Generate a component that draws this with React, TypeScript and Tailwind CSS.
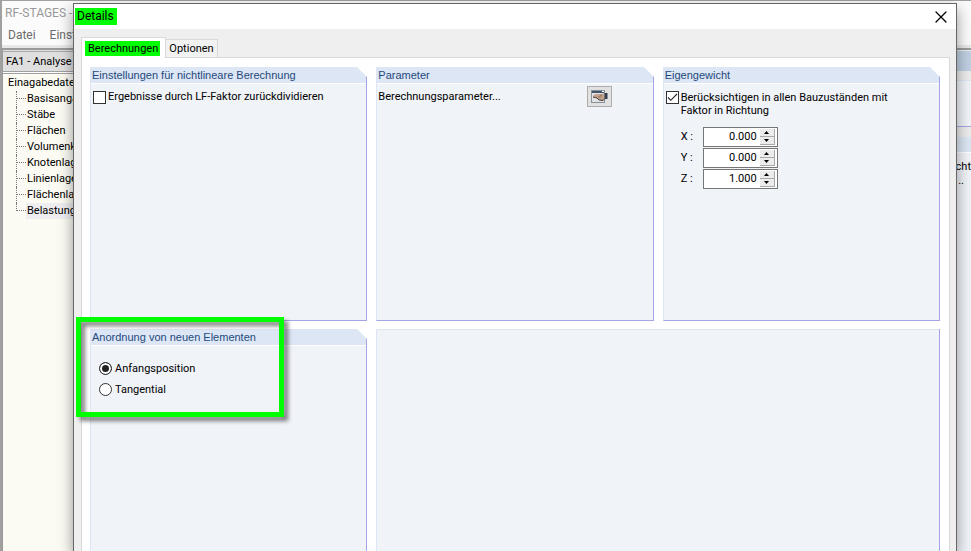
import { useState } from 'react';
import type { ReactNode } from 'react';
import { X } from 'lucide-react';

const treeItems = [
  'Basisangaben',
  'Stäbe',
  'Flächen',
  'Volumenkörper',
  'Knotenlager',
  'Linienlager',
  'Flächenlager',
  'Belastung',
];

interface PanelProps {
  title?: string;
  className?: string;
  children?: ReactNode;
}

function Panel({ title, className = '', children }: PanelProps) {
  return (
    <section className={`relative flex flex-col border-l border-r border-l-[#dce6f4] border-r-[#a5a5e6] bg-[#f0f3f8] ${className}`}>
      {title ? (
        <>
          <h2 className="h-4 bg-[#dce6f4] pl-px text-[11px] leading-4 text-[#1f497d] font-['Liberation_Sans',Arial,sans-serif]">
            {title}
          </h2>
          <div className="h-px bg-white" />
          {/* Cut corner */}
          <svg className="absolute -right-px top-0" width="10" height="10" viewBox="0 0 10 10">
            <path d="M0 0H10V10Z" fill="#fff" />
          </svg>
        </>
      ) : (
        <div className="h-px bg-[#dce6f0]" />
      )}
      {children}
    </section>
  );
}

interface FactorFieldProps {
  axis: string;
  value: number;
  onChange: (value: number) => void;
}

function FactorField({ axis, value, onChange }: FactorFieldProps) {
  const id = `factor-${axis}`;
  return (
    <div className="flex items-center">
      <label htmlFor={id} className="w-[22px] whitespace-pre">
        {axis} :
      </label>
      <div className="flex h-5 w-[75px] items-center border border-[#767676] bg-white pr-[2px]">
        <input
          id={id}
          type="text"
          className="min-w-0 flex-1 bg-transparent pr-[3px] text-right outline-none"
          value={value.toFixed(3)}
          onChange={(e) => onChange(Number(e.target.value) || 0)}
        />
        <div className="flex h-4 w-[15px] flex-col">
          <button
            type="button"
            aria-label={`${axis} erhöhen`}
            className="flex h-2 items-center justify-center border-r border-b border-[#a9a9a9] bg-[#ececec]"
            onClick={() => onChange(value + 1)}
          >
            <svg width="5" height="3" viewBox="0 0 5 3">
              <path d="M2.5 0L5 3H0Z" fill="#000" />
            </svg>
          </button>
          <button
            type="button"
            aria-label={`${axis} verringern`}
            className="flex h-2 items-center justify-center border-r border-b border-[#a9a9a9] bg-[#ececec]"
            onClick={() => onChange(value - 1)}
          >
            <svg width="5" height="3" viewBox="0 0 5 3">
              <path d="M0 0H5L2.5 3Z" fill="#000" />
            </svg>
          </button>
        </div>
      </div>
    </div>
  );
}

function CheckBox({ id, checked, onChange }: { id: string; checked: boolean; onChange: (v: boolean) => void }) {
  return (
    <span className="relative flex size-[13px] shrink-0">
      <input
        id={id}
        type="checkbox"
        className="size-[13px] appearance-none border border-[#333] bg-white"
        checked={checked}
        onChange={(e) => onChange(e.target.checked)}
      />
      {checked && (
        <svg className="pointer-events-none absolute inset-0" width="13" height="13" viewBox="0 0 13 13" fill="none">
          <path d="M2 6.5L4.8 9.3L11 3" stroke="#222" strokeWidth="1.1" />
        </svg>
      )}
    </span>
  );
}

function HandIcon() {
  return (
    <svg width="17" height="14" viewBox="0 0 17 14">
      <rect x="0.5" y="0.5" width="13" height="12" fill="#dfe3e8" stroke="#8a9098" />
      <rect x="1" y="1" width="12" height="2" fill="#41546c" />
      <rect x="11" y="1" width="2" height="1" fill="#fff" />
      <path d="M2 5.5L5 4H9L12 3.5L14 5V8.5L12 10.5L8 10L6 8L2 7Z" fill="#c2a48e" />
      <path d="M2 7L6 8L8 10L12 10.5L14 8.5" stroke="#4b3b32" strokeWidth="1" fill="none" />
      <path d="M7 7H10M9 5L11 6" stroke="#7d6351" strokeWidth="0.8" />
      <rect x="13.5" y="3" width="3" height="6" fill="#34404f" />
    </svg>
  );
}

function MainWindow() {
  return (
    <div className="flex h-full flex-col border-t border-l-2 border-[#a0a0a0] bg-[#fbfbfb]">
      <div className="flex h-6 items-center pl-[3px] text-[12px] text-[#999]">RF-STAGES -</div>
      <nav className="flex h-5 items-center gap-[14px] pl-[6px] text-[12px] text-[#6b6b6b]">
        <a href="#datei">Datei</a>
        <a href="#einstellungen">Einstellungen</a>
      </nav>
      <div className="h-[3px] bg-[#e8e8e8]" />
      <div className="flex min-h-0 flex-1 border-t-2 border-l border-[#9a9a9a]">
        <aside className="flex w-[160px] flex-col bg-[#fbfbf3]">
          <div className="border-b border-[#a0a0a0] bg-[#dfdfdf] pt-px">
            <div className="h-5 border-t border-[#a9a9a9] pl-[3px] leading-5">FA1 - Analyse</div>
          </div>
          <div className="h-[2px] border-b border-[#a0a0a0] bg-white" />
          <div className="pt-px pl-[5px] leading-4">Einagabedaten</div>
          <ul className="pl-[13px]">
            {treeItems.map((item, i) => (
              <li key={item} className="flex h-4 whitespace-nowrap leading-4">
                <span className={`w-px border-l border-dotted border-[#777] ${i === treeItems.length - 1 ? 'h-2' : 'h-4'}`} />
                <span className="h-2 w-[9px] border-b border-dotted border-[#777]" />
                <span className={`flex-1 pl-px ${i === treeItems.length - 1 ? 'bg-[#eeeef0]' : ''}`}>{item}</span>
              </li>
            ))}
          </ul>
        </aside>
        <main className="flex flex-1 flex-col bg-[#ececec] text-right">
          <div className="mt-px h-5 bg-[#bfd0e2]" />
          <div className="mt-[9px] h-[47px] border-t border-b border-t-[#dce6f4] border-b-[#a5a5e6] bg-[#f0f3f8]" />
          <div className="mt-[10px] h-4 border-b border-white bg-[#dce6f4]" />
          <div className="flex-1 bg-[#f0f3f8] pt-[7px] leading-[14px]">
            <p>cht</p>
            <p className="pr-[7px]">..</p>
          </div>
        </main>
      </div>
    </div>
  );
}

export default function App() {
  const [divideByFactor, setDivideByFactor] = useState(false);
  const [selfWeight, setSelfWeight] = useState(true);
  const [factors, setFactors] = useState({ X: 0, Y: 0, Z: 1 });
  const [position, setPosition] = useState('Anfangsposition');

  return (
    <div className="relative h-screen overflow-hidden font-[Roboto,Tahoma,sans-serif] text-[11px] leading-[14px] text-black">
      <MainWindow />

      {/* Dialog */}
      <div
        role="dialog"
        aria-label="Details"
        className="absolute top-[3px] right-[14px] bottom-0 left-[73px] flex flex-col border border-b-0 border-[#666] bg-[#efefef] shadow-[0_6px_14px_rgba(0,0,0,0.4)]"
      >
        <header className="flex h-[25px] shrink-0 items-center justify-between bg-white pr-[5px] pl-px">
          <h1 className="h-[17px] w-[42px] bg-[#00ff00] pl-[2px] text-[12px] leading-[17px]">Details</h1>
          <button type="button" aria-label="Schließen">
            <X size={20} strokeWidth={1.5} />
          </button>
        </header>

        <div role="tablist" className="mt-2 flex h-5 shrink-0 items-end pl-[7px]">
          <button
            type="button"
            role="tab"
            aria-selected="true"
            className="relative z-10 -mb-px flex h-[21px] w-[85px] items-center border border-b-0 border-[#d9d9d9] bg-white pl-[3px]"
          >
            <span className="h-[15px] w-[75px] bg-[#00ff00] pl-[3px] text-left leading-[15px]">Berechnungen</span>
          </button>
          <button
            type="button"
            role="tab"
            aria-selected="false"
            className="h-[18px] w-[52px] border border-b-0 border-l-0 border-[#d9d9d9] bg-[#f2f2f2] text-center"
          >
            Optionen
          </button>
        </div>

        <div className="mr-[6px] ml-[7px] grid min-h-0 flex-1 grid-cols-3 grid-rows-[254px_1fr] gap-x-[9px] gap-y-2 border border-b-0 border-[#d9d9d9] bg-white pt-[9px] pr-[9px] pl-2">
          <Panel title="Einstellungen für nichtlineare Berechnung" className="border-b border-b-[#a5a5e6]">
            <div className="flex items-center gap-[2px] pt-[6px] pl-[2px]">
              <CheckBox id="divide" checked={divideByFactor} onChange={setDivideByFactor} />
              <label htmlFor="divide">Ergebnisse durch LF-Faktor zurückdividieren</label>
            </div>
          </Panel>

          <Panel title="Parameter" className="border-b border-b-[#a5a5e6]">
            <div className="flex items-start justify-between pt-[2px] pr-[41px] pl-px">
              <span className="pt-1">Berechnungsparameter...</span>
              <button
                type="button"
                aria-label="Berechnungsparameter"
                className="flex h-[21px] w-[25px] items-center justify-center border border-[#adadad] bg-[#e1e1e1]"
              >
                <HandIcon />
              </button>
            </div>
          </Panel>

          <Panel title="Eigengewicht" className="border-b border-b-[#a5a5e6]">
            <div className="flex gap-[2px] pt-[7px] pl-[2px]">
              <CheckBox id="self-weight" checked={selfWeight} onChange={setSelfWeight} />
              <label htmlFor="self-weight" className="leading-[13px]">
                Berücksichtigen in allen Bauzuständen mit
                <br />
                Faktor in Richtung
              </label>
            </div>
            <div className="flex flex-col gap-px pt-[10px] pl-[17px]">
              {(['X', 'Y', 'Z'] as const).map((axis) => (
                <FactorField
                  key={axis}
                  axis={axis}
                  value={factors[axis]}
                  onChange={(value) => setFactors((prev) => ({ ...prev, [axis]: value }))}
                />
              ))}
            </div>
          </Panel>

          <Panel title="Anordnung von neuen Elementen">
            <div className="flex flex-col gap-2 pt-4 pl-2">
              {['Anfangsposition', 'Tangential'].map((name) => (
                <label key={name} className="flex h-[13px] items-center gap-[3px]">
                  <input
                    type="radio"
                    name="position"
                    className="size-[13px] appearance-none rounded-full border border-[#333] bg-white checked:bg-[#222] checked:shadow-[inset_0_0_0_2px_white]"
                    checked={position === name}
                    onChange={() => setPosition(name)}
                  />
                  {name}
                </label>
              ))}
            </div>
            {/* Highlight frame */}
            <div className="pointer-events-none absolute -top-3 -left-[15px] h-[100px] w-[208px] border-5 border-[#00ff00] drop-shadow-[4px_4px_2px_rgba(0,0,0,0.5)]" />
          </Panel>

          <Panel className="col-span-2" />
        </div>
      </div>
    </div>
  );
}
